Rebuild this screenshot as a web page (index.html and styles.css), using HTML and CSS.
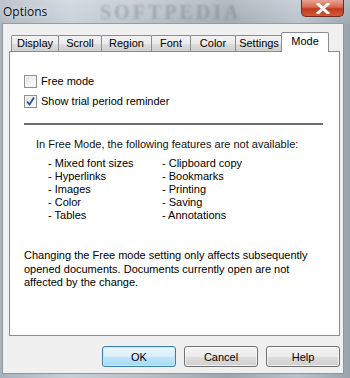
FILE: index.html
```html
<!DOCTYPE html>
<html>
<head>
<meta charset="utf-8">
<link rel="stylesheet" href="styles.css">
</head>
<body>
<div class="window">
  <div class="titlebar">
    <span class="title">Options</span>
    <span class="watermark">SOFTPEDIA</span>
    <div class="close">
      <svg width="14" height="11" viewBox="0 0 14 11"><path d="M2 1 L12 10 M12 1 L2 10" stroke="#fff" stroke-width="3" stroke-linecap="square"/></svg>
    </div>
  </div>
  <div class="client">
    <div class="tabs">
      <div class="tab w-display">Display</div>
      <div class="tab w-scroll">Scroll</div>
      <div class="tab w-region">Region</div>
      <div class="tab w-font">Font</div>
      <div class="tab w-color">Color</div>
      <div class="tab w-settings">Settings</div>
      <div class="tab active">Mode</div>
    </div>
    <div class="panel">
      <label class="check-row">
        <span class="box"></span>
        <span>Free mode</span>
      </label>
      <label class="check-row">
        <span class="box">
          <svg width="11" height="11" viewBox="0 0 11 11"><path d="M2 5.5 L4.5 8.5 L9 1.5" fill="none" stroke="#2c4b9c" stroke-width="1.8"/></svg>
        </span>
        <span>Show trial period reminder</span>
      </label>
      <div class="sep"></div>
      <div class="features">
        <div class="lead">In Free Mode, the following features are not available:</div>
        <div class="cols">
          <div class="col">
            <div>- Mixed font sizes</div>
            <div>- Hyperlinks</div>
            <div>- Images</div>
            <div>- Color</div>
            <div>- Tables</div>
          </div>
          <div class="col">
            <div>- Clipboard copy</div>
            <div>- Bookmarks</div>
            <div>- Printing</div>
            <div>- Saving</div>
            <div>- Annotations</div>
          </div>
        </div>
      </div>
      <p class="note">Changing the Free mode setting only affects subsequently opened documents. Documents currently open are not affected by the change.</p>
    </div>
    <div class="buttons">
      <button class="btn default">OK</button>
      <button class="btn">Cancel</button>
      <button class="btn">Help</button>
    </div>
  </div>
</div>
</body>
</html>
```
FILE: styles.css
```css
html, body {
  margin: 0;
  padding: 0;
}
body {
  width: 350px;
  height: 378px;
  overflow: hidden;
  font-family: "Liberation Sans", Arial, sans-serif;
  font-size: 11px;
  color: #000;
}
.window {
  width: 350px;
  height: 378px;
  box-sizing: border-box;
  display: flex;
  flex-direction: column;
  background: linear-gradient(90deg, #a9b3bd 0%, #c7cfd6 20%, #b4bcc4 45%, #9ea6ad 65%, #b8c1c9 85%, #9aa4ad 100%);
  position: relative;
}
.titlebar {
  height: 24px;
  display: flex;
  align-items: flex-start;
  position: relative;
  background: linear-gradient(180deg, rgba(255,255,255,0.25), rgba(255,255,255,0.05));
}
.title {
  font-family: "Open Sans", "Liberation Sans", sans-serif;
  font-size: 12px;
  color: #111;
  margin: 3px 0 0 3px;
  text-shadow: 0 0 6px rgba(255,255,255,0.9);
}
.watermark {
  position: absolute;
  left: 100px;
  top: 1px;
  font-family: "Liberation Serif", serif;
  font-size: 20px;
  line-height: 22px;
  font-weight: bold;
  letter-spacing: 3px;
  color: rgba(90, 96, 104, 0.3);
  filter: blur(1.2px);
}
.close {
  position: absolute;
  right: 6px;
  top: 0;
  width: 43px;
  height: 17px;
  box-sizing: border-box;
  border: 1px solid #6b2a22;
  border-top: none;
  border-radius: 0 0 5px 5px;
  background: linear-gradient(180deg, #e8a393 0%, #d5684f 45%, #c03a1d 55%, #d2583a 100%);
  display: flex;
  align-items: center;
  justify-content: center;
}
.client {
  margin: 0 7px 5px 3px;
  flex: 1;
  background: #f0f0f0;
  box-shadow: 0 0 0 1px #8d97a0;
  display: flex;
  flex-direction: column;
  padding: 8px 3px 0 6px;
  box-sizing: border-box;
}
.tabs {
  display: flex;
  align-items: flex-end;
  height: 19px;
  padding-left: 2px;
  position: relative;
  z-index: 2;
}
.tab {
  height: 16px;
  box-sizing: border-box;
  border: 1px solid #898c95;
  border-bottom: none;
  margin-right: -1px;
  background: linear-gradient(180deg, #f2f2f2 0%, #ebebeb 50%, #dddddd 51%, #cfcfcf 100%);
  font-family: "Liberation Sans", Arial, sans-serif;
  font-size: 11px;
  line-height: 15px;
  text-align: center;
  color: #000;
  border-radius: 2px 2px 0 0;
}
.w-display { width: 48px; }
.w-scroll { width: 44px; }
.w-region { width: 51px; }
.w-font { width: 40px; }
.w-color { width: 46px; }
.w-settings { width: 48px; }
.tab.active {
  width: 48px;
  height: 20px;
  margin-bottom: -1px;
  background: #fff;
  line-height: 16px;
  margin-left: -1px;
}
.panel {
  height: 285px;
  box-sizing: border-box;
  border: 1px solid #898c95;
  background: #fff;
  padding: 23px 10px 0 14px;
  display: flex;
  flex-direction: column;
}
.check-row {
  display: flex;
  align-items: center;
  height: 13px;
  margin-bottom: 7px;
  gap: 4px;
  line-height: 13px;
}
.box {
  width: 13px;
  height: 13px;
  box-sizing: border-box;
  border: 1px solid #8e8f8f;
  background: linear-gradient(135deg, #dcdcdc 0%, #f5f5f5 60%, #fff 100%);
  box-shadow: inset 0 0 0 1px #f4f4f4;
  display: flex;
  align-items: center;
  justify-content: center;
}
.sep {
  height: 2px;
  background: #6b6b6b;
  margin: 8px 1px 0 0;
  width: 299px;
}
.features {
  margin-top: 13px;
  padding-left: 12px;
  line-height: 13px;
}
.lead {
  color: #111;
}
.cols {
  display: flex;
  margin-top: 6px;
  padding-left: 12px;
}
.col {
  width: 114px;
}
.note {
  margin: 27px 0 0 0;
  line-height: 13.5px;
  width: 300px;
}
.buttons {
  display: flex;
  justify-content: flex-end;
  gap: 8px;
  margin-top: 10px;
  padding-right: 0;
}
.btn {
  width: 74px;
  height: 21px;
  box-sizing: border-box;
  border: 1px solid #707070;
  border-radius: 3px;
  background: linear-gradient(180deg, #f2f2f2 0%, #ebebeb 50%, #dddddd 51%, #cfcfcf 100%);
  font-family: "Liberation Sans", Arial, sans-serif;
  font-size: 11px;
  color: #000;
  padding: 0;
  box-shadow: inset 0 0 0 1px rgba(255,255,255,0.7);
}
.btn.default {
  border-color: #3c7fb1;
  background: linear-gradient(180deg, #eaf6fd 0%, #d9f0fc 50%, #bee6fd 51%, #a7d9f5 100%);
  box-shadow: inset 0 0 0 1px #c9e9fb;
}
```
